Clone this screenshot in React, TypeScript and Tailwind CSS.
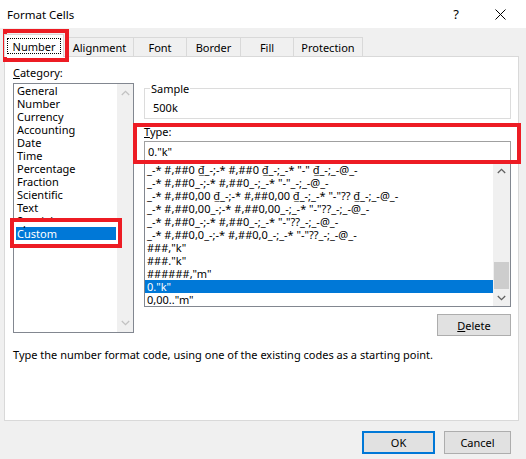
import React from "react";

const categories = [
  "General",
  "Number",
  "Currency",
  "Accounting",
  "Date",
  "Time",
  "Percentage",
  "Fraction",
  "Scientific",
  "Text",
  "Special",
  "Custom",
];

const formats = [
  '_-* #,##0 ₫_-;-* #,##0 ₫_-;_-* "-" ₫_-;_-@_-',
  '_-* #,##0_-;-* #,##0_-;_-* "-"_-;_-@_-',
  '_-* #,##0,00 ₫_-;-* #,##0,00 ₫_-;_-* "-"?? ₫_-;_-@_-',
  '_-* #,##0,00_-;-* #,##0,00_-;_-* "-"??_-;_-@_-',
  '_-* #,##0_-;-* #,##0_-;_-* "-"??_-;_-@_-',
  '_-* #,##0,0_-;-* #,##0,0_-;_-* "-"??_-;_-@_-',
  '###,"k"',
  '###."k"',
  '######,"m"',
  '0."k"',
  '0,00.."m"',
];

function Chevron({ up, color }: { up: boolean; color: string }) {
  return (
    <svg width="9" height="6" viewBox="0 0 9 6">
      <path
        d={up ? "M0.8 5 L4.5 1.3 L8.2 5" : "M0.8 1 L4.5 4.7 L8.2 1"}
        fill="none"
        stroke={color}
        strokeWidth="1.3"
      />
    </svg>
  );
}

export default function App() {
  return (
    <div className="relative w-[526px] h-[459px] overflow-hidden bg-[#f0f0f0] font-['Noto_Sans',sans-serif] text-[11px] leading-[13px] text-black">
      {/* Title bar */}
      <div className="flex h-[28px] items-center bg-white pl-[7px]">
        <span className="text-[11.5px]">Format Cells</span>
        <span className="ml-auto mr-[36px] text-[13px]">?</span>
        <svg width="11" height="11" viewBox="0 0 11 11" className="mr-[20px]">
          <path d="M0.5 0.5 L10.5 10.5 M10.5 0.5 L0.5 10.5" stroke="#000" strokeWidth="1" />
        </svg>
      </div>

      {/* Tabs */}
      <div className="mt-[6px] flex h-[22px] items-end pl-[4px]">
        <div className="relative z-10 -mb-px h-[23px] w-[60px] border border-b-0 border-[#d9d9d9] bg-white">
          <div className="ml-[2px] mt-[3px] flex h-[16px] w-[54px] items-center justify-center border border-dotted border-black">
            Number
          </div>
        </div>
        <div className="ml-px flex h-[19px] w-[68px] items-center justify-center border-l border-t border-[#d9d9d9]">
          Alignment
        </div>
        <div className="flex h-[19px] w-[53px] items-center justify-center border-l border-t border-[#d9d9d9]">
          Font
        </div>
        <div className="flex h-[19px] w-[54px] items-center justify-center border-l border-t border-[#d9d9d9]">
          Border
        </div>
        <div className="flex h-[19px] w-[53px] items-center justify-center border-l border-t border-[#d9d9d9]">
          Fill
        </div>
        <div className="flex h-[19px] w-[70px] items-center justify-center border-x border-t border-[#d9d9d9]">
          Protection
        </div>
      </div>

      {/* Panel */}
      <div className="ml-[4px] h-[365px] w-[515px] border border-[#d9d9d9] bg-white">
        <div className="flex">
          {/* Left column */}
          <div className="ml-[8px] pt-[9px]">
            <div className="h-[13px]">
              <span className="underline">C</span>ategory:
            </div>
            <div className="mt-[4px] flex h-[250px] w-[121px] border border-[#828790]">
              <div className="flex-1">
                {categories.map((c) => (
                  <div
                    key={c}
                    className={
                      c === "Custom"
                        ? "ml-[2px] mr-px h-[13px] bg-[#0078d7] pl-px text-white"
                        : "ml-[2px] mr-px h-[13px] pl-px"
                    }
                  >
                    {c}
                  </div>
                ))}
              </div>
              <div className="flex w-[16px] flex-col items-center justify-between bg-[#f0f0f0] py-[6px]">
                <Chevron up color="#c2c2c2" />
                <Chevron up={false} color="#c2c2c2" />
              </div>
            </div>
          </div>

          {/* Right column */}
          <div className="ml-[10px] flex w-[367px] flex-col pt-[31px]">
            <div className="relative h-[31px] border border-[#dcdcdc] pl-[8px] pt-[12px]">
              <span className="absolute -top-[7px] left-[5px] bg-white px-px">Sample</span>
              500k
            </div>
            <div className="mt-[6px] h-[13px]">
              <span className="underline">T</span>ype:
            </div>
            <div className="mt-[3px] flex h-[20px] items-center border border-[#a0a0a0] pl-[3px]">
              0."k"
            </div>
            <div className="flex h-[146px] border border-[#828790]">
              <div className="flex-1 overflow-hidden pt-px">
                {formats.map((f, i) => (
                  <div
                    key={i}
                    className={
                      i === 9
                        ? "h-[13px] whitespace-nowrap bg-[#0078d7] pl-[2px] text-white"
                        : "h-[13px] whitespace-nowrap pl-[2px]"
                    }
                  >
                    {f}
                  </div>
                ))}
              </div>
              <div className="flex w-[17px] flex-col bg-[#f0f0f0]">
                <div className="flex h-[17px] items-center justify-center">
                  <Chevron up color="#606060" />
                </div>
                <div className="flex-1" />
                <div className="mx-px h-[27px] bg-[#cdcdcd]" />
                <div className="flex h-[17px] items-center justify-center">
                  <Chevron up={false} color="#606060" />
                </div>
              </div>
            </div>
            <div className="mt-[7px] flex h-[22px] w-[74px] items-center justify-center self-end border border-[#adadad] bg-[#e1e1e1]">
              <span>
                <span className="underline">D</span>elete
              </span>
            </div>
          </div>
        </div>
        <div className="ml-[8px] mt-[12px] h-[13px]">
          Type the number format code, using one of the existing codes as a starting point.
        </div>
      </div>

      {/* Buttons */}
      <div className="mt-[10px] flex justify-end pr-[15px]">
        <div className="flex h-[23px] w-[73px] items-center justify-center border-2 border-[#0078d7] bg-[#e1e1e1]">
          OK
        </div>
        <div className="ml-[9px] flex h-[23px] w-[67px] items-center justify-center border border-[#adadad] bg-[#e1e1e1]">
          Cancel
        </div>
      </div>

      {/* Red annotation boxes */}
      <div className="absolute left-[3px] top-[29px] h-[33px] w-[66px] border-4 border-[#ed1c24]" />
      <div className="absolute left-[10px] top-[218px] h-[30px] w-[112px] border-4 border-[#ed1c24]">
        <div className="h-full w-full border-x-2 border-b-[3px] border-t-4 border-white" />
      </div>
      <div className="absolute left-[133px] top-[123px] h-[41px] w-[388px] border-4 border-[#ed1c24]" />
    </div>
  );
}
